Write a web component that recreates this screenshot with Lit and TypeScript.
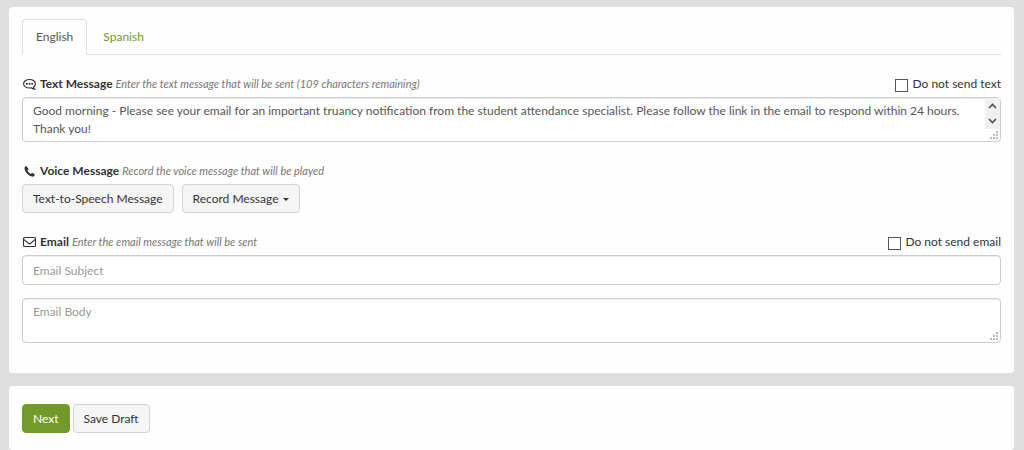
import { LitElement, html, css, svg } from "lit";
import { customElement, state } from "lit/decorators.js";

const commentIcon = svg`
  <path d="M7.500 1.500C4.200 1.500 1.600 3.300 1.600 5.700s2.500 4.300 5.900 4.300c.6 0 1.200-.1 1.700-.2 1 .9 2.100 1.300 3.400 1.300-.7-.7-1-1.300-1.100-2.200 1.200-.8 1.900-1.900 1.900-3.200 0-2.400-2.600-4.200-5.900-4.200z" fill="none" stroke="#333" stroke-width="1.200"/>
  <circle cx="4.900" cy="5.700" r="1" fill="#333"/><circle cx="7.500" cy="5.700" r="1" fill="#333"/><circle cx="10.100" cy="5.700" r="1" fill="#333"/>`;
const phoneIcon = svg`
  <path d="M4.500 1 3 1.800C2.100 3.100 2.500 5 3.900 7.100c1.600 2.400 3.700 4 6 4.500 1.100.2 2-.2 2.600-1.200l.2-1.200L10 7.700 8.700 9C7.400 8.400 6.100 7 5.500 5.600l1.200-1.200z" fill="#333"/>`;
const envelopeIcon = svg`
  <rect x="1.500" y="1.500" width="12" height="9" rx="1" fill="none" stroke="#333" stroke-width="1.100"/>
  <path d="M1.700 3.300 6.300 7.200q1.200.9 2.400 0l4.600-3.900" fill="none" stroke="#333" stroke-width="1.100"/>`;

@customElement("app-root")
export class AppRoot extends LitElement {
  @state() private language = "English";

  static styles = css`
    :host {
      display: block;
      box-sizing: border-box;
      min-height: 100vh;
      padding: 7px 10px 0 9px;
      background: #dfdfdf;
      color: #333;
      font: 12px/18px Lato, "Liberation Sans", sans-serif;
    }
    * { box-sizing: border-box; }
    .panel {
      padding: 12px 13px 30px;
      border-radius: 4px;
      background: #fefefe;
    }
    .actions {
      display: flex;
      gap: 3px;
      margin-top: 13px;
      padding: 18px 13px 17px;
    }
    .tabs {
      display: flex;
      gap: 2px;
      margin-bottom: 20px;
      border-bottom: 1px solid #ddd;
    }
    .tab {
      height: 36px;
      margin-bottom: -1px;
      padding: 0 13px;
      border: 1px solid transparent;
      border-radius: 4px 4px 0 0;
      background: none;
      color: #72992c;
      font: inherit;
    }
    .tab.active {
      border-color: #ddd;
      border-bottom-color: #fefefe;
      background: #fefefe;
      color: #555;
    }
    .section { margin-bottom: 20px; }
    .section:last-child { margin-bottom: 0; }
    .heading {
      display: flex;
      align-items: center;
      height: 18px;
      margin-bottom: 4px;
    }
    .icon { width: 14px; height: 13px; margin-right: 4px; }
    .title { font-weight: 700; }
    .hint {
      margin-left: 3px;
      color: #777;
      font-size: 11px;
      font-style: italic;
    }
    .optout {
      display: flex;
      align-items: center;
      gap: 4px;
      margin-left: auto;
    }
    .check {
      appearance: none;
      width: 13px;
      height: 13px;
      margin: 3px 0 0;
      border: 1px solid #555;
      background: #fff;
    }
    .check:checked { background: #72992c; }
    .field { position: relative; }
    .control {
      display: block;
      width: 100%;
      padding: 4px 10px;
      border: 1px solid #ccc;
      border-radius: 4px;
      background: #fff;
      box-shadow: inset 0 1px 1px rgba(0, 0, 0, 0.07);
      color: #555;
      font: inherit;
      resize: none;
      overflow: hidden;
    }
    .control::placeholder { color: #999; opacity: 1; }
    .area { height: 45px; }
    .line { height: 30px; margin-bottom: 13px; }
    .scroll {
      position: absolute;
      top: 1px;
      right: 1px;
      display: grid;
      width: 15px;
      height: 31px;
      background: #f0f0f0;
    }
    .arrow { display: grid; place-items: center; padding: 0; border: 0; background: none; }
    .grip { position: absolute; right: 2px; bottom: 2px; width: 9px; height: 9px; }
    .buttons { display: flex; gap: 8px; }
    .btn {
      height: 29px;
      padding: 0 10px;
      border: 1px solid #d3d3d3;
      border-radius: 4px;
      background: #f5f5f5;
      color: #333;
      font: inherit;
    }
    .primary { border-color: #72992c; background: #72992c; color: #fff; }
    .caret {
      display: inline-block;
      margin-left: 1px;
      border: 3px solid transparent;
      border-top-color: #333;
      border-bottom: 0;
      vertical-align: middle;
    }
  `;

  private tab(name: string) {
    const active = this.language === name;
    return html`<button class="tab ${active ? "active" : ""}" role="tab" aria-selected=${active}
      @click=${() => (this.language = name)}>${name}</button>`;
  }

  private heading(icon: unknown, title: string, hint: string, target = "", optout = "") {
    return html`<div class="heading">
      <svg class="icon" viewBox="0 0 14 13" aria-hidden="true">${icon}</svg>
      <label class="title" for=${target}>${title}</label><span class="hint">${hint}</span>
      ${optout ? html`<label class="optout"><input class="check" type="checkbox" />${optout}</label>` : ""}
    </div>`;
  }

  private grip() {
    return html`<svg class="grip" viewBox="0 0 9 9" fill="#bbb" aria-hidden="true">
      <path d="M6 0h2v2H6zM3 3h2v2H3zM6 3h2v2H6zM0 6h2v2H0zM3 6h2v2H3zM6 6h2v2H6z" />
    </svg>`;
  }

  private arrow(label: string, d: string) {
    return html`<button class="arrow" aria-label=${label}>
      <svg width="9" height="6" viewBox="0 0 9 6" fill="none" stroke="#505050" stroke-width="1.600"><path d=${d} /></svg>
    </button>`;
  }

  render() {
    return html`
      <main class="panel">
        <div class="tabs" role="tablist">${this.tab("English")}${this.tab("Spanish")}</div>
        <section class="section">
          ${this.heading(commentIcon, "Text Message", "Enter the text message that will be sent (109 characters remaining)", "text", "Do not send text")}
          <div class="field">
            <textarea class="control area" id="text" .value=${"Good morning - Please see your email for an important truancy notification from the student attendance specialist. Please follow the link in the email to respond within 24 hours.\nThank you!"}></textarea>
            <div class="scroll">
              ${this.arrow("Scroll up", "M1 5l3.500-3.500L8 5")}
              ${this.arrow("Scroll down", "M1 1l3.500 3.500L8 1")}
            </div>
            ${this.grip()}
          </div>
        </section>
        <section class="section">
          ${this.heading(phoneIcon, "Voice Message", "Record the voice message that will be played", "speech")}
          <div class="buttons">
            <button class="btn" id="speech">Text-to-Speech Message</button>
            <button class="btn">Record Message <span class="caret"></span></button>
          </div>
        </section>
        <section class="section">
          ${this.heading(envelopeIcon, "Email", "Enter the email message that will be sent", "subject", "Do not send email")}
          <input class="control line" id="subject" type="text" placeholder="Email Subject" />
          <div class="field">
            <textarea class="control area" aria-label="Email Body" placeholder="Email Body"></textarea>
            ${this.grip()}
          </div>
        </section>
      </main>
      <footer class="panel actions">
        <button class="btn primary">Next</button>
        <button class="btn">Save Draft</button>
      </footer>
    `;
  }
}
